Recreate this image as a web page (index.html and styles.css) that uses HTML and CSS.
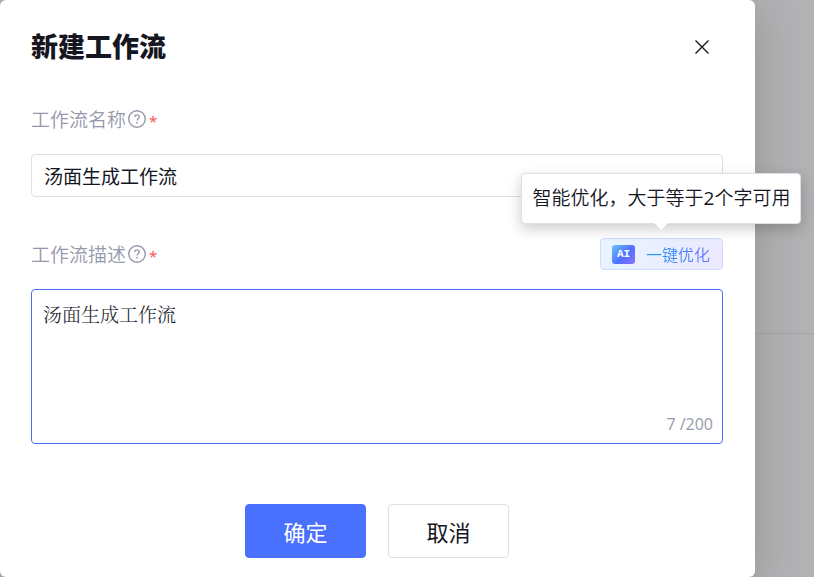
FILE: index.html
```html
<!doctype html>
<html lang="zh-CN">
    <head>
        <meta charset="UTF-8" />
        <meta name="viewport" content="width=device-width, initial-scale=1.0" />
        <title>新建工作流</title>
        <link rel="stylesheet" href="styles.css">
    </head>
    <body>
        <form class="modal">
            <header class="modal-header">
                <h1>新建工作流</h1>
                <button type="button" class="close" aria-label="关闭">
                    <svg width="16" height="16" viewBox="0 0 16 16" fill="none" stroke="currentColor" stroke-width="1.4">
                        <path d="M1.5 1.5l13 13M14.5 1.5l-13 13" />
                    </svg>
                </button>
            </header>

            <div class="field">
                <div class="field-head">
                    <label for="name">工作流名称</label>
                    <svg class="help" viewBox="0 0 18 18" fill="none" stroke="currentColor">
                        <circle cx="9" cy="9" r="8.3" stroke-width="1.4" />
                        <path d="M6.8 7.1C6.8 5.7 7.7 4.9 9 4.9s2.3.8 2.3 2.1c0 1.5-2.2 1.7-2.2 3.6" stroke-width="1.4" />
                        <circle cx="9.1" cy="12.7" r=".9" fill="currentColor" stroke="none" />
                    </svg>
                    <span class="required">*</span>
                </div>
                <input type="text" id="name" value="汤面生成工作流" required />
            </div>

            <div class="field">
                <div class="field-head">
                    <label for="desc">工作流描述</label>
                    <svg class="help" viewBox="0 0 18 18" fill="none" stroke="currentColor">
                        <circle cx="9" cy="9" r="8.3" stroke-width="1.4" />
                        <path d="M6.8 7.1C6.8 5.7 7.7 4.9 9 4.9s2.3.8 2.3 2.1c0 1.5-2.2 1.7-2.2 3.6" stroke-width="1.4" />
                        <circle cx="9.1" cy="12.7" r=".9" fill="currentColor" stroke="none" />
                    </svg>
                    <span class="required">*</span>
                    <div class="optimize-wrap">
                        <button type="button" class="optimize" aria-describedby="tip">
                            <span class="ai">AI</span>
                            <span class="optimize-text">一键优化</span>
                        </button>
                        <div class="tooltip" id="tip" role="tooltip">智能优化，大于等于<span class="num">2</span>个字可用</div>
                    </div>
                </div>
                <div class="textarea-wrap">
                    <textarea id="desc" maxlength="200" required>汤面生成工作流</textarea>
                    <span class="count">7 /200</span>
                </div>
            </div>

            <footer class="actions">
                <button type="submit" class="btn primary">确定</button>
                <button type="button" class="btn">取消</button>
            </footer>
        </form>
        <div class="page-behind"></div>
    </body>
</html>
```
FILE: styles.css
```css
* {
    box-sizing: border-box;
}
body {
    margin: 0;
    display: grid;
    grid-template-columns: 1fr 59px;
    min-height: 100vh;
    overflow: hidden;
    background: #b2b2b4;
    color: #15161f;
    font-family: "Open Sans", "Noto Sans CJK SC", sans-serif;
    font-size: 19px;
}
button,
input,
textarea {
    font: inherit;
    color: inherit;
    margin: 0;
}
button {
    padding: 0;
    cursor: pointer;
}

/* Dialog */
.modal {
    position: relative;
    z-index: 1;
    padding: 27px 32px 19px 31px;
    background: #fff;
    border-radius: 6px;
    box-shadow: 0 8px 48px rgba(0, 0, 0, 0.18);
}
.modal-header {
    display: flex;
    align-items: center;
    justify-content: space-between;
    height: 40px;
    margin-bottom: 36px;
}
h1 {
    margin: 0;
    font-size: 27px;
    line-height: 40px;
    font-weight: 900;
}
.close {
    display: flex;
    padding: 13px;
    border: none;
    background: none;
}

/* Form fields */
.field {
    margin-bottom: 41px;
}
.field-head {
    display: flex;
    align-items: center;
    height: 32px;
    margin-bottom: 19px;
    color: #9699ad;
}
.field-head label {
    font-weight: 350;
}
.help {
    width: 18px;
    height: 18px;
    margin-left: 2px;
}
.required {
    margin-left: 3px;
    padding-top: 4px;
    font-family: "Noto Sans", sans-serif;
    font-size: 15px;
    color: #f65656;
}
input {
    display: block;
    width: 100%;
    height: 43px;
    padding: 0 12px;
    border: 1px solid #dfdfe6;
    border-radius: 4px;
}
.textarea-wrap {
    position: relative;
}
textarea {
    display: block;
    width: 100%;
    height: 155px;
    padding: 10px 11px;
    border: 1px solid #4a70f5;
    border-radius: 4px;
    outline: none;
    resize: none;
    line-height: 28px;
    font-family: "Noto Serif CJK SC", "Noto Sans CJK SC", serif;
    font-weight: 300;
}
.count {
    position: absolute;
    right: 10px;
    bottom: 8px;
    font-size: 16px;
    line-height: 24px;
    color: #9699ad;
}

/* AI optimize button and its tooltip */
.optimize-wrap {
    position: relative;
    margin-left: auto;
}
.optimize {
    display: flex;
    align-items: center;
    gap: 11px;
    height: 32px;
    padding: 0 12px 0 11px;
    border: 1px solid #ccdcfe;
    border-radius: 4px;
    background: linear-gradient(110deg, #e8f4ff, #ebe9fe);
    font-size: 16px;
}
.ai {
    width: 23px;
    height: 19px;
    border-radius: 3px;
    background: linear-gradient(135deg, #6ebeff, #4e72ff 55%, #8b72fa);
    color: #fff;
    font: bold 11px/19px "Liberation Mono", monospace;
    text-align: center;
}
.optimize-text {
    background: linear-gradient(100deg, #159bff, #6a6cfa);
    background-clip: text;
    -webkit-background-clip: text;
    color: transparent;
    font-weight: 350;
}
.tooltip {
    position: absolute;
    left: 50%;
    bottom: 46px;
    transform: translateX(-50%);
    padding: 0 10px;
    border: 1px solid #dfdfe6;
    border-radius: 4px;
    background: #fff;
    box-shadow: 0 5px 14px rgba(0, 0, 0, 0.2);
    color: #15161f;
    font-weight: 350;
    line-height: 49px;
    white-space: nowrap;
}
.num {
    font-weight: 400;
}
.tooltip::after {
    content: "";
    position: absolute;
    top: 100%;
    left: 50%;
    margin-left: -7px;
    border: 7px solid transparent;
    border-top-color: #fff;
    border-bottom: none;
}

/* Footer buttons */
.actions {
    display: flex;
    justify-content: center;
    gap: 22px;
    margin-top: 60px;
}
.btn {
    width: 121px;
    height: 54px;
    border: 1px solid #dfdfe6;
    border-radius: 4px;
    background: #fff;
    font-size: 22px;
}
.primary {
    border-color: #4a70ff;
    background: #4a70ff;
    color: #fff;
}

/* Dimmed page under the dialog */
.page-behind::before {
    content: "";
    display: block;
    height: 333px;
    border-bottom: 1px solid #a5a5a7;
}
```
